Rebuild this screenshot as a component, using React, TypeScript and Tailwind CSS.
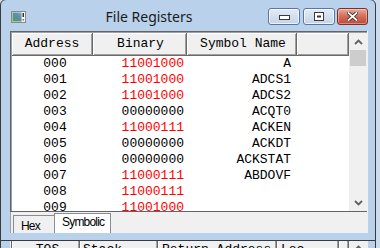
import React from "react";

type Row = [string, string, string, boolean];

const rows: Row[] = [
  ["000", "11001000", "A", true],
  ["001", "11001000", "ADCS1", true],
  ["002", "11001000", "ADCS2", true],
  ["003", "00000000", "ACQT0", false],
  ["004", "11000111", "ACKEN", true],
  ["005", "00000000", "ACKDT", false],
  ["006", "00000000", "ACKSTAT", false],
  ["007", "11000111", "ABDOVF", true],
  ["008", "11000111", "", true],
  ["009", "11001000", "", true],
];

function Chevron({ down = false }: { down?: boolean }) {
  return (
    <svg width="9" height="6" viewBox="0 0 9 6">
      <polyline
        points={down ? "1,1 4.5,4.5 8,1" : "1,5 4.5,1.5 8,5"}
        fill="none"
        stroke="#606060"
        strokeWidth="1.8"
      />
    </svg>
  );
}

function TitleIcon() {
  return (
    <svg width="15" height="12" viewBox="0 0 15 12">
      <defs>
        <linearGradient id="ig" x1="0" y1="1" x2="1" y2="0">
          <stop offset="0" stopColor="#4e9e55" />
          <stop offset="0.6" stopColor="#5d8fa8" />
          <stop offset="1" stopColor="#7fa6c6" />
        </linearGradient>
      </defs>
      <rect x="0.5" y="0.5" width="14" height="11" fill="#e8e8e8" stroke="#8a8a8a" />
      <rect x="1.5" y="1.5" width="9" height="9" fill="url(#ig)" />
      <rect x="11" y="1.5" width="2.5" height="9" fill="#ffffff" />
      <rect x="11.5" y="2" width="1.5" height="4" fill="#333333" />
      <rect x="11.5" y="8" width="1.5" height="1.5" fill="#6a6a6a" />
    </svg>
  );
}

function CaptionButtons() {
  return (
    <div className="flex mt-[8px]">
      <div className="w-[32px] h-[17px] mr-[3px] rounded-[3px] border border-[#5b76a0] bg-linear-to-b from-[#e3ecf6] to-[#c3d4e9] shadow-[inset_0_0_0_1px_rgba(255,255,255,0.7)] flex justify-center pt-[6px]">
        <svg width="11" height="5" viewBox="0 0 11 5">
          <rect x="0.5" y="0.5" width="10" height="4" fill="#ffffff" stroke="#3b3b3b" />
        </svg>
      </div>
      <div className="w-[32px] h-[17px] mr-[2px] rounded-[3px] border border-[#5b76a0] bg-linear-to-b from-[#e3ecf6] to-[#c3d4e9] shadow-[inset_0_0_0_1px_rgba(255,255,255,0.7)] flex justify-center pt-[3px]">
        <svg width="10" height="9" viewBox="0 0 10 9">
          <rect x="0.5" y="0.5" width="9" height="8" fill="#ffffff" stroke="#3b3b3b" />
          <rect x="3" y="3.5" width="4" height="2" fill="#3b3b3b" />
        </svg>
      </div>
      <div className="w-[31px] h-[17px] rounded-[3px] border border-[#7d3027] bg-linear-to-b from-[#e8a99b] via-[#d46a58] to-[#c24a38] shadow-[inset_0_0_0_1px_rgba(255,255,255,0.35)] flex justify-center pt-[3px]">
        <svg width="11" height="9" viewBox="0 0 11 9">
          <path d="M1.5,1 L9.5,8 M9.5,1 L1.5,8" stroke="#4a2a25" strokeWidth="3.6" strokeLinecap="square" />
          <path d="M1.5,1 L9.5,8 M9.5,1 L1.5,8" stroke="#ffffff" strokeWidth="1.8" strokeLinecap="square" />
        </svg>
      </div>
    </div>
  );
}

const headCell =
  "h-[23px] shrink-0 bg-[#f0f0f0] border-r border-b border-[#696969] shadow-[inset_1px_1px_0_#ffffff,inset_-1px_-1px_0_#a0a0a0] flex items-center justify-center leading-[16px]";

export default function App() {
  return (
    <div className="relative w-[380px] h-[248px] overflow-hidden bg-[#cddcec] font-['Liberation_Mono','Courier_New',monospace] text-[13px] text-black">
      {/* window behind (only its header strip is visible) */}
      <div className="absolute left-0 top-[232px] w-[376px] h-[30px] border-x border-[#3a3a3a] bg-[#b9d1ea] flex pt-[7px]">
        <div className="ml-[9px] w-[358px] h-[23px] bg-[#f0f0f0] flex pl-[1px]">
          <div className={headCell + " w-[69px] border-l pl-[4px]"}>TOS</div>
          <div className={headCell + " w-[78px] !justify-start pl-[3px]"}>Stack</div>
          <div className={headCell + " w-[119px] !justify-start pl-[4px]"}>Return Address</div>
          <div className={headCell + " w-[62px] !justify-start pl-[4px]"}>Loc</div>
          <div className={headCell + " w-[10px]"} />
          <div className="w-[18px] h-[23px] bg-[#f0f0f0] flex justify-center pt-[6px]">
            <Chevron />
          </div>
        </div>
      </div>

      {/* main window */}
      <div className="absolute left-0 top-[-1px] w-[376px] h-[242px] rounded-t-[6px] border border-[#3a3a3a] bg-[#b9d1ea] flex flex-col">
        {/* title bar */}
        <div className="h-[31px] shrink-0 flex items-start pl-[10px] pr-[7px]">
          <div className="mt-[11px] w-[15px] h-[12px]">
            <TitleIcon />
          </div>
          <div className="flex-1 text-center pl-[4px] mt-[7px] leading-[20px] text-[14px] text-[#1b1b1b] font-['Noto_Sans','Open_Sans',sans-serif]">
            File Registers
          </div>
          <CaptionButtons />
        </div>

        {/* client area */}
        <div className="ml-[9px] w-[358px] h-[202px] shrink-0 bg-[#f0f0f0] flex flex-col">
          {/* grid */}
          <div className="w-[357px] h-[181px] shrink-0 border-t border-l border-b border-[#646464] bg-white">
            <div className="w-full h-full border-t border-l border-[#a0a0a0] flex">
              <div className="w-[337px] h-full overflow-hidden flex flex-col">
                <div className="flex shrink-0">
                  <div className={headCell + " w-[81px]"}>Address</div>
                  <div className={headCell + " w-[94px] pl-[2px]"}>Binary</div>
                  <div className={headCell + " w-[110px] pl-[3px]"}>Symbol Name</div>
                  <div className={headCell + " w-[52px]"} />
                </div>
                {rows.map((r) => (
                  <div key={r[0]} className="flex h-[16px] shrink-0 leading-[16px]">
                    <div className="w-[81px] text-center pl-[5px]">{r[0]}</div>
                    <div className={"w-[94px] text-right pr-[3px] " + (r[3] ? "text-[#ff0000]" : "text-black")}>
                      {r[1]}
                    </div>
                    <div className="w-[110px] text-right pr-[6px]">{r[2]}</div>
                  </div>
                ))}
              </div>
              {/* vertical scrollbar */}
              <div className="w-[18px] h-full bg-[#f0f0f0] flex flex-col">
                <div className="h-[17px] shrink-0 flex items-center justify-center">
                  <Chevron />
                </div>
                <div className="h-[16px] shrink-0 mx-[1px] bg-[#cdcdcd]" />
                <div className="flex-1" />
                <div className="h-[17px] shrink-0 flex items-center justify-center">
                  <Chevron down />
                </div>
              </div>
            </div>
          </div>

          {/* tabs */}
          <div className="h-[21px] shrink-0 flex items-end pl-[2px] border-l border-[#a0a0a0] font-['Liberation_Sans',Arial,sans-serif] text-[12px] tracking-[-0.8px] leading-[14px]">
            <div className="w-[42px] h-[18px] border-l border-t border-r border-[#898c95] bg-[#f0f0f0] pl-[7px] pt-[3px]">
              Hex
            </div>
            <div className="w-[57px] h-[20px] -ml-[1px] border-l border-t border-r border-[#898c95] bg-white pl-[7px] pt-[1px]">
              Symbolic
            </div>
          </div>
        </div>
      </div>
    </div>
  );
}
